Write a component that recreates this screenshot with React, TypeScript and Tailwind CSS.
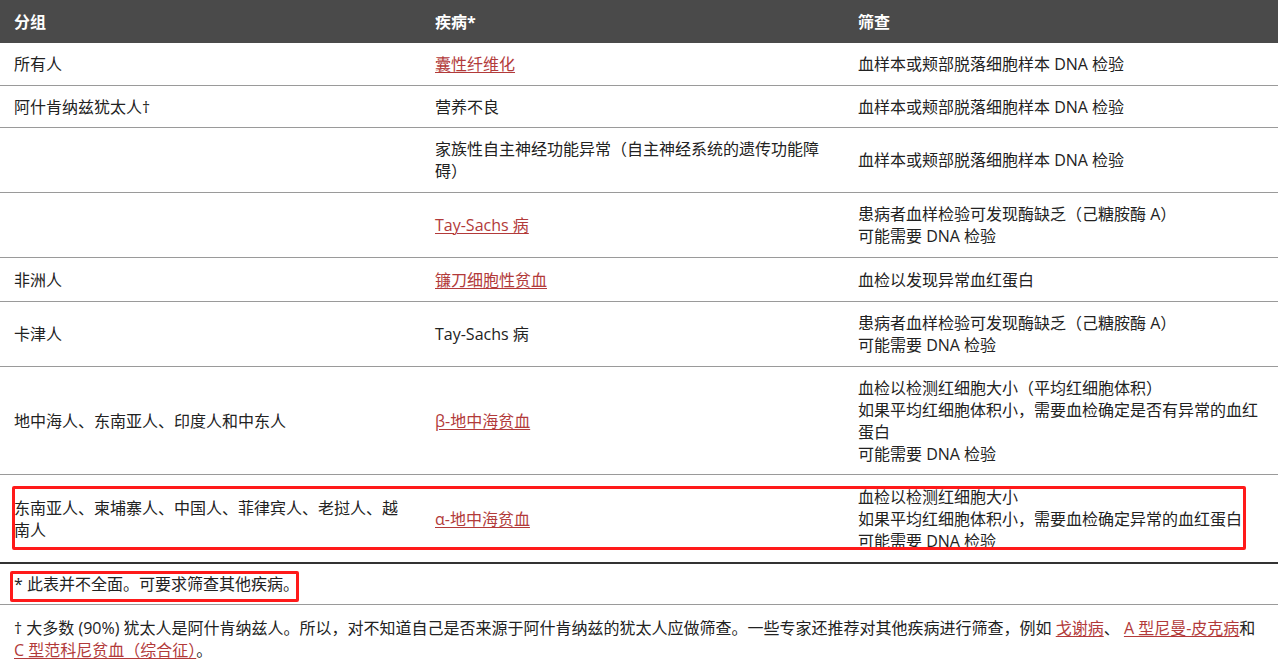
const L = ({ children }: { children: React.ReactNode }) => (
  <a className="text-[#b23a3a] underline decoration-1 underline-offset-2">{children}</a>
);
type Row = { h: number; a: React.ReactNode; b: React.ReactNode; c: React.ReactNode };
const rows: Row[] = [
  { h: 43, a: "所有人", b: <L>囊性纤维化</L>, c: "血样本或颊部脱落细胞样本 DNA 检验" },
  { h: 42, a: "阿什肯纳兹犹太人†", b: "营养不良", c: "血样本或颊部脱落细胞样本 DNA 检验" },
  { h: 65, a: "", b: <>家族性自主神经功能异常（自主神经系统的遗传功能障<br />碍）</>, c: "血样本或颊部脱落细胞样本 DNA 检验" },
  { h: 65, a: "", b: <L>Tay-Sachs 病</L>, c: <>患病者血样检验可发现酶缺乏（己糖胺酶 A）<br />可能需要 DNA 检验</> },
  { h: 44, a: "非洲人", b: <L>镰刀细胞性贫血</L>, c: "血检以发现异常血红蛋白" },
  { h: 65, a: "卡津人", b: "Tay-Sachs 病", c: <>患病者血样检验可发现酶缺乏（己糖胺酶 A）<br />可能需要 DNA 检验</> },
  { h: 108, a: "地中海人、东南亚人、印度人和中东人", b: <L>β-地中海贫血</L>, c: <>血检以检测红细胞大小（平均红细胞体积）<br />如果平均红细胞体积小，需要血检确定是否有异常的血红<br />蛋白<br />可能需要 DNA 检验</> },
  { h: 87, a: <>东南亚人、柬埔寨人、中国人、菲律宾人、老挝人、越<br />南人</>, b: <L>α-地中海贫血</L>, c: <>血检以检测红细胞大小<br />如果平均红细胞体积小，需要血检确定异常的血红蛋白<br />可能需要 DNA 检验</> },
];
export default function App() {
  return (
    <div className="relative w-[1278px] h-[664px] overflow-hidden bg-white text-[16px] leading-[22px] text-[#222]" style={{ fontFamily: '"Open Sans","Noto Sans CJK SC",sans-serif' }}>
      <div className="flex h-[43px] items-center bg-[#4a4a4a] font-bold text-white">
        <div className="w-[435px] pl-[14px]">分组</div>
        <div className="w-[423px]">疾病*</div>
        <div className="flex-1">筛查</div>
      </div>
      {rows.map((r, i) => (
        <div key={i} className={`flex items-center ${i < rows.length - 1 ? "border-b border-[#9a9a9a]" : ""}`} style={{ height: r.h }}>
          <div className="w-[435px] pl-[14px]">{r.a}</div>
          <div className="w-[423px]">{r.b}</div>
          <div className="flex-1">{r.c}</div>
        </div>
      ))}
      <div className="border-t-2 border-[#333] border-b border-b-[#9a9a9a] h-[43px] flex items-center pl-[14px]">* 此表并不全面。可要求筛查其他疾病。</div>
      <div className="pl-[14px] pt-[12px]">
        † 大多数 (90%) 犹太人是阿什肯纳兹人。所以，对不知道自己是否来源于阿什肯纳兹的犹太人应做筛查。一些专家还推荐对其他疾病进行筛查，例如 <L>戈谢病</L>、 <L>A 型尼曼-皮克病</L>和<br />
        <L>C 型范科尼贫血（综合征）</L>。
      </div>
      <div className="absolute left-[12px] top-[486px] w-[1234px] h-[64px] border-[3px] border-[#ff1a1a] rounded-[2px]" />
      <div className="absolute left-[10px] top-[571px] w-[289px] h-[31px] border-[3px] border-[#ff1a1a] rounded-[2px]" />
    </div>
  );
}
